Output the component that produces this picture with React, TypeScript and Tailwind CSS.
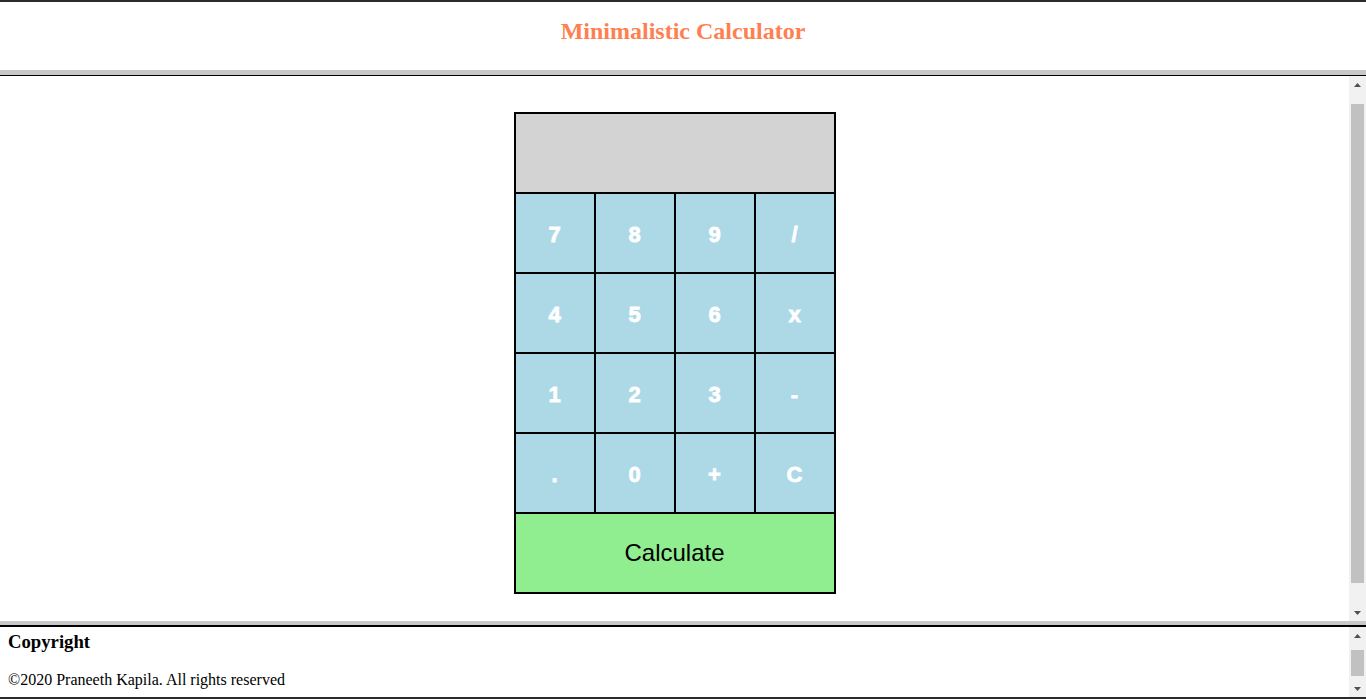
const keys = ["7", "8", "9", "/", "4", "5", "6", "x", "1", "2", "3", "-", ".", "0", "+", "C"];

function Arrow({ up }: { up?: boolean }) {
  return (
    <div className="h-[17px] flex items-center justify-center">
      <svg width="7" height="4" viewBox="0 0 7 4">
        {up ? <path d="M0 4 L3.5 0 L7 4 Z" fill="#505050" /> : <path d="M0 0 L3.5 4 L7 0 Z" fill="#505050" />}
      </svg>
    </div>
  );
}

function Scrollbar({ before, after }: { before: string; after: string }) {
  return (
    <div className="w-[17px] bg-[#f1f1f1] flex flex-col shrink-0">
      <Arrow up />
      <div className={before} />
      <div className="flex-1 mx-[2px] bg-[#c1c1c1]" />
      <div className={after} />
      <Arrow />
    </div>
  );
}

function Calculator() {
  return (
    <div className="w-[322px] self-start border border-black">
      <div className="h-[80px] bg-[#d3d3d3] border border-black" />
      <div className="grid grid-cols-4">
        {keys.map((k) => (
          <button
            key={k}
            className="h-[80px] pt-[3px] bg-[#add8e6] border border-black text-white text-[22px] font-bold [-webkit-text-stroke:0.8px_white] flex items-center justify-center"
          >
            {k}
          </button>
        ))}
      </div>
      <button className="w-full h-[80px] bg-[#90ee90] border border-black text-[24px] text-black">
        Calculate
      </button>
    </div>
  );
}

export default function App() {
  return (
    <div className="h-[699px] w-[1366px] flex flex-col overflow-hidden bg-white font-['Liberation_Serif',serif]">
      <div className="h-[2px] bg-[#2b2b2b]" />
      <header className="h-[68px] pt-[15px] text-center">
        <h2 className="text-[24px] leading-[28px] font-bold text-[#ff7f50]">Minimalistic Calculator</h2>
      </header>
      <div className="h-[5px] bg-[#c8c8c8]" />
      <div className="h-[1px] bg-black" />
      <main className="h-[545px] flex">
        <div className="flex-1 flex justify-center pt-[36px] font-['Liberation_Sans',Arial,sans-serif]">
          <Calculator />
        </div>
        <Scrollbar before="h-[11px]" after="h-[21px]" />
      </main>
      <div className="h-[4px] bg-[#c8c8c8]" />
      <div className="h-[2px] bg-black" />
      <footer className="h-[70px] flex">
        <div className="flex-1 px-[8px] pt-[4px] text-black">
          <h3 className="text-[18.72px] leading-[22px] font-bold">Copyright</h3>
          <p className="mt-[18px] text-[16px] leading-[18px]">©2020 Praneeth Kapila. All rights reserved</p>
        </div>
        <Scrollbar before="h-[6px]" after="h-[4px]" />
      </footer>
      <div className="h-[2px] bg-[#2b2b2b]" />
    </div>
  );
}
